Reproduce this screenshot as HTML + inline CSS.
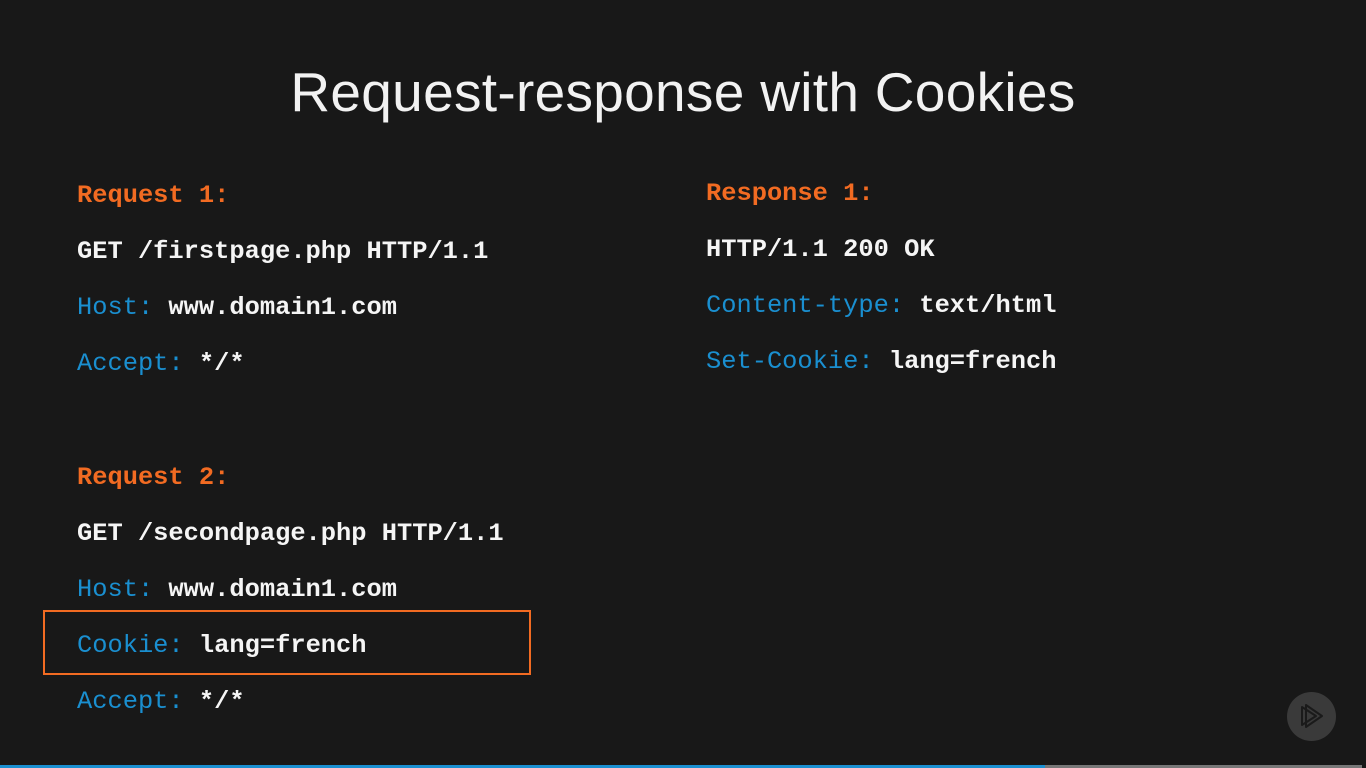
<!DOCTYPE html>
<html><head><style>
body{margin:0;width:1366px;height:768px;background:#181818;overflow:hidden;position:relative;font-family:"Liberation Mono",monospace;}
.t{position:absolute;left:0;width:1366px;top:60px;text-align:center;font-family:"Liberation Sans",sans-serif;font-size:55px;color:#f2f2f2;line-height:64px;letter-spacing:0.3px}
.l{position:absolute;font-size:25.4px;line-height:30px;color:#f5f5f5;white-space:pre;font-weight:bold}
.o{color:#f26b22}.b{color:#1a8fd0;font-weight:normal}
.box{position:absolute;left:43px;top:610px;width:484px;height:61px;border:2px solid #f26b22}
</style></head><body>
<div class="t">Request-response with Cookies</div>
<div class="l o" style="left:77px;top:181px">Request 1:</div>
<div class="l" style="left:77px;top:237px">GET /firstpage.php HTTP/1.1</div>
<div class="l" style="left:77px;top:293px"><span class="b">Host:</span> www.domain1.com</div>
<div class="l" style="left:77px;top:349px"><span class="b">Accept:</span> */*</div>
<div class="l o" style="left:77px;top:463px">Request 2:</div>
<div class="l" style="left:77px;top:519px">GET /secondpage.php HTTP/1.1</div>
<div class="l" style="left:77px;top:575px"><span class="b">Host:</span> www.domain1.com</div>
<div class="box"></div>
<div class="l" style="left:77px;top:631px"><span class="b">Cookie:</span> lang=french</div>
<div class="l" style="left:77px;top:687px"><span class="b">Accept:</span> */*</div>
<div class="l o" style="left:706px;top:179px">Response 1:</div>
<div class="l" style="left:706px;top:235px">HTTP/1.1 200 OK</div>
<div class="l" style="left:706px;top:291px"><span class="b">Content-type:</span> text/html</div>
<div class="l" style="left:706px;top:347px"><span class="b">Set-Cookie:</span> lang=french</div>
<div style="position:absolute;left:1287px;top:692px;width:49px;height:49px;border-radius:50%;background:#3a3a3a"></div>
<svg style="position:absolute;left:1287px;top:692px" width="49" height="49" viewBox="0 0 49 49"><path d="M15 15 L15 33 L29 24 Z M19 13 L19 35 L35 24 Z" fill="none" stroke="#1a1a1a" stroke-width="2" stroke-linejoin="round"/></svg>
<div style="position:absolute;left:0;top:765px;width:1045px;height:3px;background:#1a8fd0"></div>
<div style="position:absolute;left:1045px;top:765px;width:317px;height:3px;background:#777"></div>
</body></html>
